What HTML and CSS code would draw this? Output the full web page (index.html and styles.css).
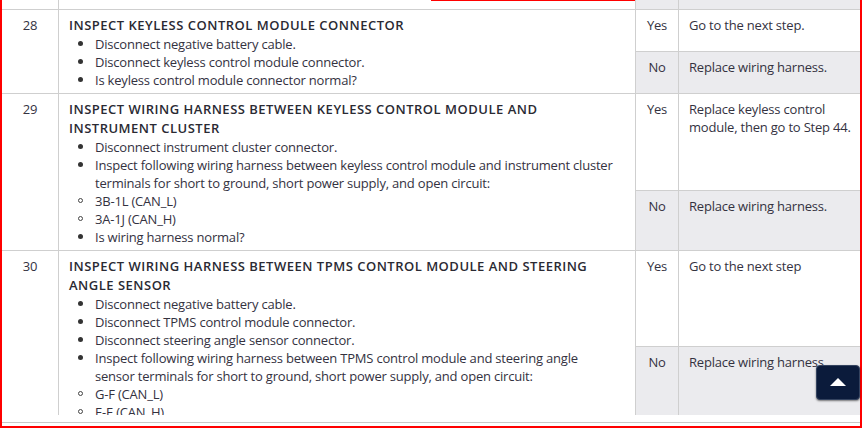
FILE: index.html
```html
<!DOCTYPE html>
<html>
<head>
<meta charset="utf-8">
<link rel="stylesheet" href="styles.css">
</head>
<body>
<div class="frame">
  <div class="viewport">
    <div class="step step-prev">
      <div class="cell num"></div>
      <div class="cell desc"></div>
      <div class="answers">
        <div class="ans ans-no ans-fill">
          <div class="cell yn"></div>
          <div class="cell act"></div>
        </div>
      </div>
    </div>

    <div class="step step-28">
      <div class="cell num">28</div>
      <div class="cell desc">
        <div class="title">INSPECT KEYLESS CONTROL MODULE CONNECTOR</div>
        <ul class="list">
          <li class="dot">Disconnect negative battery cable.</li>
          <li class="dot">Disconnect keyless control module connector.</li>
          <li class="dot">Is keyless control module connector normal?</li>
        </ul>
      </div>
      <div class="answers">
        <div class="ans ans-yes yes-28">
          <div class="cell yn">Yes</div>
          <div class="cell act">Go to the next step.</div>
        </div>
        <div class="ans ans-no">
          <div class="cell yn">No</div>
          <div class="cell act">Replace wiring harness.</div>
        </div>
      </div>
    </div>

    <div class="step step-29">
      <div class="cell num">29</div>
      <div class="cell desc">
        <div class="title">INSPECT WIRING HARNESS BETWEEN KEYLESS CONTROL MODULE AND<br>INSTRUMENT CLUSTER</div>
        <ul class="list">
          <li class="dot">Disconnect instrument cluster connector.</li>
          <li class="dot">Inspect following wiring harness between keyless control module and instrument cluster<br>terminals for short to ground, short power supply, and open circuit:</li>
          <li class="ring">3B-1L (CAN_L)</li>
          <li class="ring">3A-1J (CAN_H)</li>
          <li class="dot">Is wiring harness normal?</li>
        </ul>
      </div>
      <div class="answers">
        <div class="ans ans-yes yes-29">
          <div class="cell yn">Yes</div>
          <div class="cell act">Replace keyless control<br>module, then go to Step 44.</div>
        </div>
        <div class="ans ans-no">
          <div class="cell yn">No</div>
          <div class="cell act">Replace wiring harness.</div>
        </div>
      </div>
    </div>

    <div class="step step-30">
      <div class="cell num">30</div>
      <div class="cell desc">
        <div class="title">INSPECT WIRING HARNESS BETWEEN TPMS CONTROL MODULE AND STEERING<br>ANGLE SENSOR</div>
        <ul class="list">
          <li class="dot">Disconnect negative battery cable.</li>
          <li class="dot">Disconnect TPMS control module connector.</li>
          <li class="dot">Disconnect steering angle sensor connector.</li>
          <li class="dot">Inspect following wiring harness between TPMS control module and steering angle<br>sensor terminals for short to ground, short power supply, and open circuit:</li>
          <li class="ring">G-F (CAN_L)</li>
          <li class="ring">E-E (CAN_H)</li>
          <li class="dot">Is wiring harness normal?</li>
        </ul>
      </div>
      <div class="answers">
        <div class="ans ans-yes yes-30">
          <div class="cell yn">Yes</div>
          <div class="cell act">Go to the next step</div>
        </div>
        <div class="ans ans-no">
          <div class="cell yn">No</div>
          <div class="cell act">Replace wiring harness.</div>
        </div>
      </div>
    </div>
  </div>
  <div class="bottom-rule"></div>
</div>
<div class="mark-top"></div>
<button class="to-top" type="button" aria-label="Back to top"><span class="tri"></span></button>
</body>
</html>
```

FILE: styles.css
```css
html, body {
  margin: 0;
  padding: 0;
  background: #fff;
}
body {
  font-family: "Open Sans", "Noto Sans", sans-serif;
  font-size: 13px;
  letter-spacing: -0.2px;
  color: #34323f;
}
.frame {
  height: 428px;
  box-sizing: border-box;
  width: 862px;
  border-left: 2px solid #f00;
  border-right: 2px solid #f00;
  border-bottom: 2px solid #f00;
  display: flex;
  flex-direction: column;
}
.viewport {
  height: 415px;
  overflow: hidden;
  flex: none;
}
.bottom-rule {
  margin-top: 7px;
  border-top: 1px solid #c8c8c8;
}
.step {
  display: flex;
  border-top: 1px solid #cfcfcf;
  overflow: hidden;
}
.step-prev { height: 9px; border-top: none; }
.step-28 { height: 83px; }
.step-29 { height: 156px; }
.step-30 { height: 300px; }
.cell {
  box-sizing: border-box;
}
.num {
  width: 56px;
  flex: none;
  text-align: center;
  padding-top: 6px;
  line-height: 19px;
}
.desc {
  width: 577px;
  flex: none;
  border-left: 1px solid #cfcfcf;
  padding: 6px 4px 0 10px;
  white-space: nowrap;
}
.title {
  font-weight: 600;
  line-height: 19px;
  color: #2a2a33;
  letter-spacing: 0.5px;
}
.list {
  list-style: none;
  margin: 0;
  padding: 0;
  line-height: 18px;
}
.list li {
  position: relative;
  padding-left: 26px;
}
.list li.dot::before {
  content: "";
  position: absolute;
  left: 9px;
  top: 6px;
  width: 5px;
  height: 5px;
  border-radius: 50%;
  background: #333;
}
.list li.ring::before {
  content: "";
  position: absolute;
  left: 9px;
  top: 6px;
  width: 3px;
  height: 3px;
  border-radius: 50%;
  border: 1px solid #444;
}
.answers {
  flex: 1;
  display: flex;
  flex-direction: column;
}
.ans {
  display: flex;
}
.ans-no {
  flex: 1;
  background: #ebebee;
  border-top: 1px solid #cfcfcf;
}
.ans-fill { border-top: none; }
.yes-28 { height: 41px; }
.yes-29 { height: 96px; }
.yes-30 { height: 95px; }
.yn {
  width: 43px;
  flex: none;
  border-left: 1px solid #cfcfcf;
  text-align: center;
  padding-top: 6px;
  line-height: 19px;
}
.act {
  flex: 1;
  border-left: 1px solid #cfcfcf;
  padding: 6px 0 0 10px;
  line-height: 18px;
  white-space: nowrap;
  overflow: hidden;
}
.mark-top {
  position: absolute;
  top: 0;
  left: 431px;
  width: 204px;
  height: 1px;
  background: #f00;
}
.to-top {
  position: fixed;
  left: 816px;
  top: 365px;
  width: 44px;
  height: 35px;
  padding: 0;
  margin: 0;
  background: #0b1b3b;
  border: 1px solid #34435f;
  border-radius: 4px;
  box-shadow: 0 1px 2px rgba(0, 0, 0, 0.5);
  display: flex;
  align-items: center;
  justify-content: center;
}
.tri {
  width: 0;
  height: 0;
  border-left: 8px solid transparent;
  border-right: 8px solid transparent;
  border-bottom: 8px solid #fff;
  margin-top: -2px;
}
```
